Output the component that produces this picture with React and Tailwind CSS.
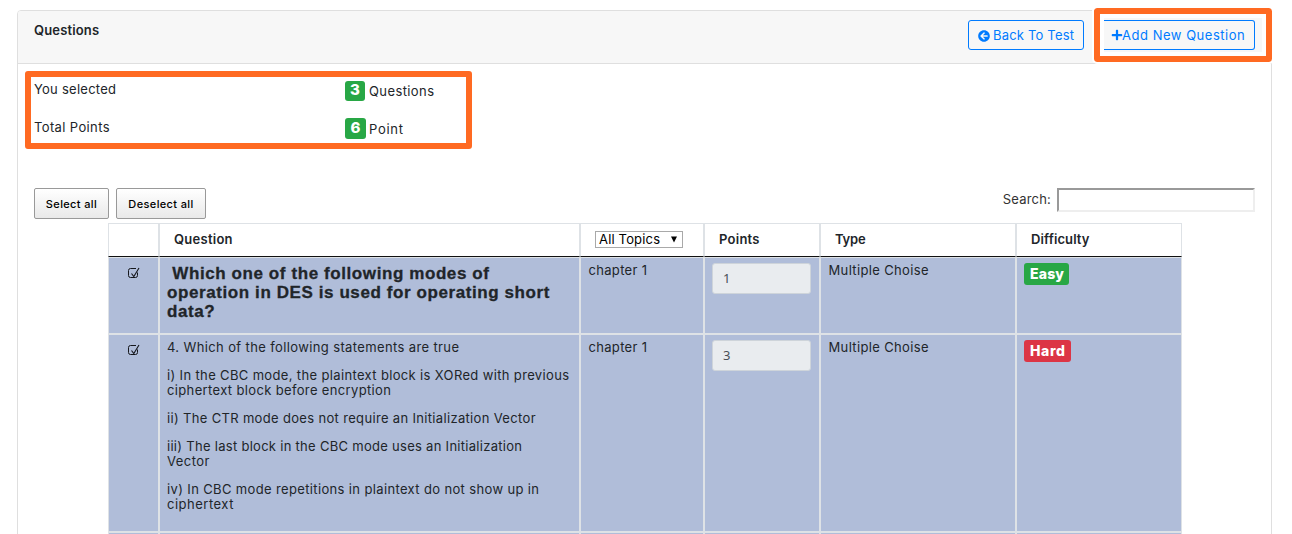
import React from "react";
import { FaArrowCircleLeft, FaPlus } from "react-icons/fa";

const cell = "border border-[#dee2e6]";
const heading = "border border-[#dee2e6] border-b-[#111] pl-[14px] pt-[5px] font-semibold leading-5";

function CheckMark() {
  return (
    <svg width="12" height="12" viewBox="0 0 12 12" fill="none" stroke="#15171c" className="ml-[19px] mt-[9px]">
      <path d="M8 1.5H2.5Q0.5 1.5 0.5 3.5V8.5Q0.5 10.5 2.5 10.5H7.5Q9.5 10.5 9.5 8.5V5.5" strokeWidth="1" />
      <path d="M3.5 6.5L5.8 9.5L11 1" strokeWidth="1.1" />
    </svg>
  );
}

function Row({ question, points, difficulty, color, height }) {
  return (
    <>
      <div className={`${cell} ${height} bg-[#b0bdd9]`}>
        <CheckMark />
      </div>
      <div className={`${cell} bg-[#b0bdd9] pl-[7px] pt-[5px]`}>{question}</div>
      <div className={`${cell} bg-[#b0bdd9] pl-[7.5px] pt-[5px] leading-[15px] tracking-[0.32px]`}>chapter 1</div>
      <div className={`${cell} bg-[#b0bdd9] pl-[7px] pt-[5px]`}>
        <div className="flex h-[31px] w-[99px] items-center rounded-[3px] border border-[#ced4da] bg-[#e9ecef] pl-[10px] pt-px font-['Noto_Sans',sans-serif] text-[13px] text-[#495057]">
          {points}
        </div>
      </div>
      <div className={`${cell} bg-[#b0bdd9] pl-[7.5px] pt-[5px] leading-[15px] tracking-[0.35px]`}>Multiple Choise</div>
      <div className={`${cell} bg-[#b0bdd9] pl-[7px] pt-[5px]`}>
        <span className={`flex h-[22px] items-center rounded-[3px] pb-px pl-[6px] text-[14px] font-extrabold text-white ${color}`}>
          {difficulty}
        </span>
      </div>
    </>
  );
}

export default function App() {
  return (
    <div className="relative h-[534px] w-[1292px] overflow-hidden bg-white pl-[17px] pt-[10px] font-['Inter',sans-serif] text-[13px] text-[#212529]">
      <div className="h-[600px] w-[1255px] rounded-t-[4px] border border-[#dfdfdf]">
        <header className="flex h-[53px] items-start justify-between rounded-t-[3px] border-b border-[#dfdfdf] bg-[#f7f7f7] pl-4 pr-4">
          <h1 className="pt-[8.5px] font-semibold leading-5 tracking-[0.15px]">Questions</h1>
          <div className="flex gap-[19px] pt-[9px] text-[#007bff]">
            <button className="flex h-[30px] w-[116px] items-center rounded-[3px] border border-[#007bff] pl-[9px] pt-px">
              <FaArrowCircleLeft size={12} />
              <span className="ml-[3px] whitespace-nowrap tracking-[0.19px]">Back To Test</span>
            </button>
            <button className="flex h-[30px] w-[152px] items-center rounded-r-[3px] border border-l-0 border-[#007bff] pl-2 pt-px">
              <FaPlus size={12} className="-mt-px" />
              <span className="-ml-px whitespace-nowrap tracking-[0.52px]">Add New Question</span>
            </button>
          </div>
        </header>

        <section className="grid grid-cols-[311px_1fr] pl-4 pt-[15px]">
          <div className="h-[38px] leading-5 tracking-[0.25px]">You selected</div>
          <div className="flex h-[38px] items-start">
            <span className="mt-[2px] flex h-5 w-5 items-center justify-center rounded-[3px] bg-[#28a745] pb-px text-[15px] font-extrabold text-white">3</span>
            <span className="ml-1 mt-[2px] leading-5 tracking-[0.4px]">Questions</span>
          </div>
          <div className="h-[38px] leading-5 tracking-[0.37px]">Total Points</div>
          <div className="flex h-[38px] items-start">
            <span className="mt-px flex h-[21px] w-[21px] items-center justify-center rounded-[3px] bg-[#28a745] text-[15px] font-extrabold text-white">6</span>
            <span className="ml-[3px] mt-[2px] leading-5 tracking-[0.72px]">Point</span>
          </div>
        </section>

        <section className="mt-[25px] flex h-[43px] items-start pl-4 pr-4 pt-[8px]">
          <button className="h-[31px] w-[75px] whitespace-nowrap rounded-[2px] border border-[#999] bg-linear-to-b from-white to-[#e9e9e9] pt-px text-[11px] font-medium tracking-[0.37px] text-black">Select all</button>
          <button className="ml-[7px] h-[31px] w-[90px] whitespace-nowrap rounded-[2px] border border-[#999] bg-linear-to-b from-white to-[#e9e9e9] pt-px text-[11px] font-medium tracking-[0.37px] text-black">Deselect all</button>
          <label className="ml-auto flex items-center">
            <span className="tracking-[0.19px] text-[#333]">Search:</span>
            <input className="ml-[6px] h-6 w-[198px] border-2 border-b-[#eee] border-l-[#999] border-r-[#eee] border-t-[#999] bg-white" />
          </label>
        </section>

        <div className="ml-[90px] grid w-[1074px] grid-cols-[51px_421px_124px_116px_196px_166px] grid-rows-[34px_77px_198px_60px]">
          <div className={heading} />
          <div className={`${heading} tracking-[0.26px]`}>Question</div>
          <div className={`${cell} border-b-[#111] pl-[14px] pt-[7px]`}>
            <div className="flex h-[17px] w-[88px] items-center border border-[#a9a9a9] pl-[3px] text-black">
              <span className="whitespace-nowrap tracking-[0.17px]">All Topics</span>
              <svg width="6" height="7" viewBox="0 0 6 7" className="-mt-px ml-[11px]"><path d="M0 0.5H6L3 6.5Z" fill="#000" /></svg>
            </div>
          </div>
          <div className={`${heading} tracking-[0.26px]`}>Points</div>
          <div className={`${heading} tracking-[-0.2px]`}>Type</div>
          <div className={`${heading} tracking-[0.11px]`}>Difficulty</div>

          <Row
            points="1"
            difficulty="Easy"
            color="w-[45px] tracking-[0.18px] bg-[#28a745]"
            height="h-[77px]"
            question={
              <h2 className="whitespace-nowrap pt-px font-['Liberation_Sans',sans-serif] text-[17px] font-bold leading-[19px] tracking-[0.59px] [-webkit-text-stroke:0.3px_#212529]">
                &nbsp;Which one of the following modes of
                <br />
                operation in DES is used for operating short
                <br />
                data?
              </h2>
            }
          />
          <Row
            points="3"
            difficulty="Hard"
            color="w-[47px] tracking-[0.6px] bg-[#dc3545]"
            height="h-[198px]"
            question={
              <div className="flex flex-col gap-[13px] whitespace-nowrap leading-[15px]">
                <p className="tracking-[0.375px]">4. Which of the following statements are true</p>
                <p className="tracking-[0.352px]">
                  i) In the CBC mode, the plaintext block is XORed with previous
                  <br />
                  ciphertext block before encryption
                </p>
                <p className="tracking-[0.332px]">ii) The CTR mode does not require an Initialization Vector</p>
                <p className="tracking-[0.287px]">
                  iii) The last block in the CBC mode uses an Initialization
                  <br />
                  <span className="tracking-[0.47px]">Vector</span>
                </p>
                <p className="tracking-[0.359px]">
                  iv) In CBC mode repetitions in plaintext do not show up in
                  <br />
                  <span className="tracking-[0.5px]">ciphertext</span>
                </p>
              </div>
            }
          />
          {[0, 1, 2, 3, 4, 5].map((i) => (
            <div key={i} className={`${cell} bg-[#b0bdd9]`} />
          ))}
        </div>
      </div>

      <div className="absolute left-[25px] top-[71px] h-[78px] w-[447px] rounded-[3px] border-[6px] border-[#ff6a22]" />
      <div className="absolute left-[1094px] top-[8px] h-[54px] w-[178px] rounded-[3px] border-[6px] border-[#ff6a22] outline-2 outline-white">
        <div className="h-full w-full border-4 border-white" />
      </div>
    </div>
  );
}
